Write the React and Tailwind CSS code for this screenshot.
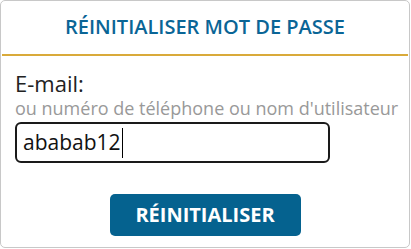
export default function App() {
  return (
    <div className="w-[411px] h-[249px] bg-white" style={{ fontFamily: '"Open Sans", sans-serif' }}>
      <div className="w-[410px] h-[248px] border border-[#c8c8c8] rounded-[5px] flex flex-col">
        <div className="h-[55px] mx-[1px] border-b-2 border-[#d9aa3a] flex items-center justify-center pb-[1px]">
          <h1 className="text-[20px] font-semibold text-[#0a6596] leading-none">RÉINITIALISER MOT DE PASSE</h1>
        </div>
        <div className="px-[14px] pt-[14px] flex flex-col">
          <label className="text-[22px] text-[#222] leading-[26px]">E-mail:</label>
          <div className="mt-[1px] text-[18px] text-[#999] leading-[22px] whitespace-nowrap">ou numéro de téléphone ou nom d'utilisateur</div>
          <div className="mt-[3px] w-[315px] h-[41px] border-2 border-[#1a1a1a] rounded-[6px] flex items-center px-[6px]">
            <span className="text-[21px] text-[#111] leading-none">ababab12</span>
            <span className="w-[1px] h-[30px] bg-black ml-[1px]"></span>
          </div>
          <div className="flex justify-center mt-[31px]">
            <button className="w-[191px] h-[42px] bg-[#05628f] rounded-[5px] text-white text-[20px] font-bold leading-none">RÉINITIALISER</button>
          </div>
        </div>
      </div>
    </div>
  );
}
